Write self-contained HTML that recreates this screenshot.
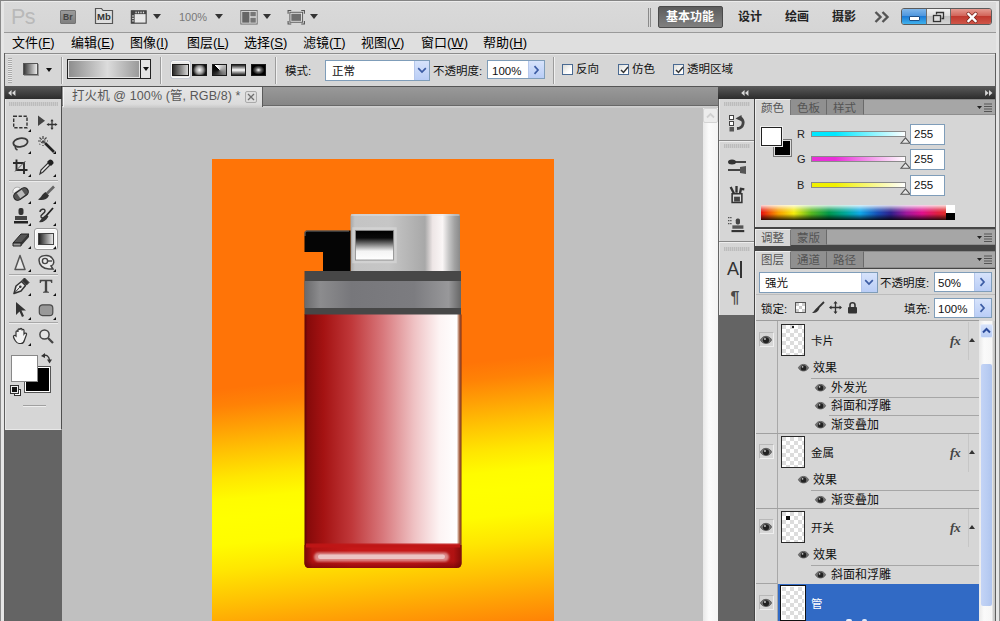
<!DOCTYPE html>
<html><head><meta charset="utf-8">
<style>
*{box-sizing:border-box;margin:0;padding:0}
html,body{width:1000px;height:621px;overflow:hidden;background:#646464}
body{font-family:"Liberation Sans","Noto Sans CJK SC",sans-serif;font-size:12px;color:#111;position:relative}
.a{position:absolute}
#root{position:absolute;left:0;top:0;width:1000px;height:621px;overflow:hidden;background:#646464}
.t{position:absolute;white-space:nowrap;line-height:16px;height:16px}
/* top bars */
#appbar{left:0;top:0;width:1000px;height:33px;background:linear-gradient(#dadada,#d5d5d5);box-shadow:inset 0 1px 0 #ececec;border-top:1px solid #808080;border-bottom:1px solid #9a9a9a}
#menubar{left:0;top:33px;width:1000px;height:20px;background:#dfdfdf}
#optbar{left:0;top:53px;width:1000px;height:33px;background:#d6d6d6;border-top:1px solid #8c8c8c}
.menu{font-size:13px;top:35px;color:#000}
.menu u{text-decoration:underline;text-underline-offset:1px}
.sep{position:absolute;width:2px;background:linear-gradient(90deg,#9c9c9c 50%,#f0f0f0 50%)}
.box{position:absolute;background:#fff;border:1px solid #7f9db9}
.arrowbtn{position:absolute;background:linear-gradient(#d7e3fb,#b9cdf6);border-left:1px solid #b5c7eb}
.chk{position:absolute;width:11px;height:11px;background:linear-gradient(135deg,#dcdcd8,#fff 70%);border:1px solid #4a6a92}

.tri{width:0;height:0;border-left:4px solid transparent;border-right:4px solid transparent;border-top:5px solid #333}
.ws{font-size:12px;font-weight:bold;color:#222}

.gi{top:64px;width:15px;height:11.500px;border:1px solid #1a1a1a}

.cnr{width:0;height:0;border-left:3px solid transparent;border-bottom:3px solid #111}
svg{overflow:visible}
</style></head><body><div id="root">

<!-- document area -->
<div class="a" id="docarea" style="left:62px;top:86px;width:656px;height:535px;background:#c0c0c0"></div>


<!-- DOC TAB BAR -->
<div class="a" style="left:62px;top:86px;width:656px;height:22px;background:linear-gradient(#555 0,#555 1px,#999 1px,#868686 19px,#686868 19px,#686868 20px,#d2d2d2 20px,#c8c8c8 22px)"></div>
<div class="a" style="left:63px;top:87px;width:200px;height:20px;background:linear-gradient(#e6e6e6,#dcdcdc 17px,#cdcdcd);border-right:1px solid #5a5a5a;border-left:1px solid #f4f4f4"></div>
<div class="t" style="left:72px;top:88px;font-size:12.500px;color:#585858;letter-spacing:.1px">打火机 @ 100% (管, RGB/8) *</div>
<div class="a" style="left:245px;top:91px;width:12px;height:12px;border:1px solid #aaa;border-radius:2px;background:#dedede"></div>
<svg class="a" style="left:247px;top:93px" width="8" height="8" viewBox="0 0 8 8"><path d="M1 1L7 7M7 1L1 7" stroke="#6e6e6e" stroke-width="1.300"/></svg>
<!-- CANVAS -->
<div class="a" style="left:212px;top:159px;width:342px;height:470px;background:linear-gradient(174deg,#ff7407 0,#ff7407 229.3px,#ff8206 247.2px,#ffa005 269.0px,#ffc403 293.9px,#ffe601 318.8px,#fffc00 340.6px,#ffff00 358.5px,#fffc00 384.6px,#ffe601 410.5px,#ffc403 439.8px,#ffa005 469.1px,#ff8206 495.0px,#ff7407 516.1px)"></div>
<svg class="a" style="left:290px;top:200px" width="190" height="380" viewBox="290 200 190 380">
<defs>
<linearGradient id="gmetal" x1="0" x2="1" y1="0" y2="0"><stop offset="0" stop-color="#a8a8a8"/><stop offset=".04" stop-color="#c4c4c4"/><stop offset=".35" stop-color="#c6c6c6"/><stop offset=".55" stop-color="#b4b4b4"/><stop offset=".68" stop-color="#a8a8a8"/><stop offset=".75" stop-color="#eee6e6"/><stop offset=".84" stop-color="#faf6f6"/><stop offset=".9" stop-color="#c4c4c4"/><stop offset=".95" stop-color="#a2a2a2"/><stop offset="1" stop-color="#8a8a8a"/></linearGradient>
<linearGradient id="gwin" x1="0" x2="0" y1="0" y2="1"><stop offset="0" stop-color="#000"/><stop offset=".25" stop-color="#0a0a0a"/><stop offset=".7" stop-color="#f4f4f4"/><stop offset="1" stop-color="#fff"/></linearGradient>
<linearGradient id="gband" x1="0" x2="1" y1="0" y2="0"><stop offset="0" stop-color="#6a6a6c"/><stop offset=".1" stop-color="#8c8c8e"/><stop offset=".3" stop-color="#77777b"/><stop offset=".7" stop-color="#7c7c80"/><stop offset=".92" stop-color="#98989a"/><stop offset="1" stop-color="#666"/></linearGradient>
<linearGradient id="gred" x1="0" x2="1" y1="0" y2="0"><stop offset="0" stop-color="#5c0606"/><stop offset=".02" stop-color="#860a0a"/><stop offset=".12" stop-color="#a41212"/><stop offset=".3" stop-color="#c0383a"/><stop offset=".5" stop-color="#d8787c"/><stop offset=".7" stop-color="#efc2c4"/><stop offset=".86" stop-color="#fdf4f4"/><stop offset=".97" stop-color="#ffffff"/><stop offset=".985" stop-color="#b07050"/><stop offset="1" stop-color="#7a2a10"/></linearGradient>
<linearGradient id="gbase" x1="0" x2="1" y1="0" y2="0"><stop offset="0" stop-color="#780808"/><stop offset=".05" stop-color="#b01212"/><stop offset=".3" stop-color="#c61818"/><stop offset=".7" stop-color="#c61818"/><stop offset=".95" stop-color="#b01212"/><stop offset="1" stop-color="#800a0a"/></linearGradient><linearGradient id="gbase2" x1="0" x2="0" y1="0" y2="1"><stop offset="0" stop-color="#600000" stop-opacity="0"/><stop offset=".7" stop-color="#600000" stop-opacity="0"/><stop offset="1" stop-color="#600000" stop-opacity=".55"/></linearGradient>
<filter id="b1"><feGaussianBlur stdDeviation="1.2"/></filter>
<filter id="b2"><feGaussianBlur stdDeviation=".7"/></filter>
</defs>
<!-- metal cap -->
<path d="M350.500 216Q350.500 214 352.500 214H457.500Q460 214 460 216V271.500H350.500Z" fill="url(#gmetal)"/><path d="M351 215H459.500" stroke="#e8e8e8" stroke-width="1.200" opacity=".8"/>
<rect x="353.500" y="228.500" width="42" height="33.500" fill="none" stroke="#dcdcdc" stroke-width="2.500" opacity=".55"/><rect x="355.500" y="230.500" width="38" height="29.500" fill="url(#gwin)" stroke="#8a8a8a" stroke-width=".8"/>
<!-- switch -->
<path d="M304.500 233Q304.500 230.500 307 230.500H350.500V271.500H323V252H304.500Z" fill="#050505"/><path d="M305 236V233Q305 231 307 231H349" fill="none" stroke="#8a8a8a" stroke-width="1" opacity=".8"/>
<!-- bands -->
<rect x="304.500" y="271" width="156.500" height="44" fill="#474747"/>
<rect x="304.500" y="281" width="156.500" height="27" fill="url(#gband)"/>
<!-- body -->
<path d="M304.500 314.500H461.500V563Q461.500 568 456.500 568H309.500Q304.500 568 304.500 563Z" fill="url(#gred)"/>
<path d="M304.500 545H461.500V563Q461.500 568 456.500 568H309.500Q304.500 568 304.500 563Z" fill="url(#gbase)"/><path d="M304.500 545H461.500V563Q461.500 568 456.500 568H309.500Q304.500 568 304.500 563Z" fill="url(#gbase2)"/>
<rect x="306" y="543.500" width="154" height="4" fill="#c01616" filter="url(#b2)" opacity=".9"/>
<rect x="314" y="552.500" width="135" height="9" rx="4.500" fill="#dc8888" filter="url(#b1)"/>
<rect x="318" y="554.500" width="127" height="4.500" rx="2.200" fill="#ecc4c4" filter="url(#b2)"/>
</svg>
<!-- canvas v-scrollbar -->
<div class="a" style="left:703px;top:108px;width:15px;height:513px;background:linear-gradient(90deg,#e8e8e8,#fbfbfb 40%,#f4f4f4)"></div>
<div class="a" style="left:703px;top:108px;width:15px;height:15px;background:#ececec;border:1px solid #d4d4d4;border-radius:2px"></div>
<svg class="a" style="left:706px;top:112px" width="9" height="7" viewBox="0 0 9 7"><path d="M1 5.500L4.500 2L8 5.500" fill="none" stroke="#d0d0d0" stroke-width="1.800"/></svg>
<!-- END CANVAS -->

<div class="a" id="appbar"></div>
<div class="a" id="menubar"></div>
<div class="a" id="optbar"></div>


<!-- APP BAR CONTENT -->
<div class="t" style="left:11px;top:3px;font-size:21.500px;line-height:28px;height:28px;color:#b9b9b9;letter-spacing:-0.5px">Ps</div>
<div class="a" style="left:60px;top:10px;width:16px;height:14px;background:linear-gradient(#9a9a9a,#808080);border:1px solid #747474;border-radius:1px"></div>
<div class="t" style="left:63px;top:10px;font-size:8.500px;font-weight:bold;color:#444;line-height:14px;height:14px">Br</div>
<svg class="a" style="left:94px;top:7px" width="20" height="18" viewBox="0 0 20 18"><path d="M1.5 16.5V1.5H7.5L9 3.5H18.500V16.5Z" fill="#dedede" stroke="#555" stroke-width="1.2"/></svg>
<div class="t" style="left:97px;top:10px;font-size:9.5px;font-weight:bold;color:#333;line-height:14px;height:14px">Mb</div>
<svg class="a" style="left:130px;top:10px" width="17.500" height="14" viewBox="0 0 20 17"><rect x="1" y="1" width="18" height="15" fill="#e8e8e8" stroke="#444" stroke-width="1.4"/><rect x="1" y="1" width="18" height="4" fill="#444"/><rect x="1" y="1" width="4" height="15" fill="#444"/><g fill="#ddd"><rect x="2" y="6.500" width="2" height="1.500"/><rect x="2" y="9.500" width="2" height="1.500"/><rect x="2" y="12.500" width="2" height="1.500"/><rect x="6" y="2" width="1.500" height="2"/><rect x="9" y="2" width="1.500" height="2"/><rect x="12" y="2" width="1.500" height="2"/><rect x="15" y="2" width="1.500" height="2"/></g></svg>
<div class="a tri" style="left:153px;top:14px"></div>
<div class="t" style="left:179px;top:9px;font-size:11px;color:#777">100%</div>
<div class="a tri" style="left:215px;top:14px"></div>
<svg class="a" style="left:240px;top:9.500px" width="18" height="14.500" viewBox="0 0 19 16"><rect x=".5" y=".5" width="18" height="15" fill="#e4e4e4" stroke="#666"/><rect x="2" y="2" width="8" height="12" fill="#666"/><rect x="11" y="2" width="6" height="5" fill="#777"/><rect x="11" y="8.500" width="6" height="5.500" fill="#777"/></svg>
<div class="a tri" style="left:263px;top:14px"></div>
<svg class="a" style="left:287px;top:9.500px" width="18.500" height="14.500" viewBox="0 0 19 16"><rect x="3.500" y="3.500" width="12" height="9" fill="#6e6e6e" stroke="#eee" stroke-width="1"/><rect x="2.500" y="2.500" width="14" height="11" fill="none" stroke="#555" stroke-width="1"/><path d="M.5 4V.5H4M15 .5H18.500V4M18.500 12V15.500H15M4 15.500H.5V12" fill="none" stroke="#555" stroke-width="1.200"/></svg>
<div class="a tri" style="left:310px;top:14px"></div>

<div class="a" style="left:648px;top:8px;width:1px;height:19px;background:#8a8a8a"></div>
<div class="a" style="left:650px;top:8px;width:1px;height:19px;background:#8a8a8a"></div>
<div class="a" style="left:658px;top:6px;width:65px;height:22px;background:linear-gradient(#5c5c5c,#808080);border:1px solid #4a4a4a;border-radius:2px"></div>
<div class="t ws" style="left:666px;top:9px;color:#fff">基本功能</div>
<div class="t ws" style="left:738px;top:9px">设计</div>
<div class="t ws" style="left:785px;top:9px">绘画</div>
<div class="t ws" style="left:832px;top:9px">摄影</div>
<svg class="a" style="left:874px;top:11px" width="16" height="12" viewBox="0 0 16 12"><path d="M1.5 1L6.500 6L1.5 11M8.500 1L13.500 6L8.500 11" fill="none" stroke="#555" stroke-width="2.400"/></svg>
<!-- window buttons -->
<div class="a" style="left:901px;top:8px;width:91px;height:17px;border-radius:3px;border:1px solid #5b5b5b;overflow:hidden;background:#ccc">
 <div class="a" style="left:0;top:0;width:24px;height:15px;background:linear-gradient(#7fb6ea 0,#4f97de 45%,#1c7bd6 50%,#3fb1ec 100%)"></div>
 <div class="a" style="left:24px;top:0;width:25px;height:15px;background:linear-gradient(#f2f2f2 0,#dcdcdc 45%,#c2c2c2 50%,#d4d4d4 100%);border-left:1px solid #6d6d6d;border-right:1px solid #6d6d6d"></div>
 <div class="a" style="left:49px;top:0;width:41px;height:15px;background:linear-gradient(#e59a90 0,#d2655a 45%,#c0392f 50%,#cf5547 100%)"></div>
 <div class="a" style="left:7px;top:7px;width:11px;height:5px;background:#fff;border:1px solid #1d4f86;border-radius:1px"></div>
 <svg class="a" style="left:30px;top:2px" width="13" height="12" viewBox="0 0 13 12"><path d="M4.500 3.500V1.500H11.500V7.500H9.500" fill="none" stroke="#333" stroke-width="1.300"/><rect x="1.500" y="4.500" width="7" height="6" fill="#ddd" stroke="#333" stroke-width="1.300"/></svg>
 <svg class="a" style="left:63.500px;top:2.500px" width="12" height="11" viewBox="0 0 13 12"><path d="M2.500 2L10.500 10M10.500 2L2.500 10" stroke="#7a2a22" stroke-width="4.200" stroke-linecap="round"/><path d="M2.500 2L10.500 10M10.500 2L2.500 10" stroke="#fff" stroke-width="2.600" stroke-linecap="round"/></svg>
</div>
<!-- END APP BAR -->


<!-- MENU -->
<div class="t menu" style="left:12px">文件(<u>F</u>)</div>
<div class="t menu" style="left:71px">编辑(<u>E</u>)</div>
<div class="t menu" style="left:130px">图像(<u>I</u>)</div>
<div class="t menu" style="left:187px">图层(<u>L</u>)</div>
<div class="t menu" style="left:244px">选择(<u>S</u>)</div>
<div class="t menu" style="left:303px">滤镜(<u>T</u>)</div>
<div class="t menu" style="left:361px">视图(<u>V</u>)</div>
<div class="t menu" style="left:421px">窗口(<u>W</u>)</div>
<div class="t menu" style="left:483px">帮助(<u>H</u>)</div>

<!-- OPTIONS BAR -->
<div class="a" style="left:8px;top:58px;width:4px;height:25px;background:repeating-linear-gradient(#aaa 0,#aaa 1px,#e8e8e8 1px,#e8e8e8 2px)"></div>
<div class="a" style="left:23px;top:63px;width:15px;height:12px;background:linear-gradient(90deg,#3a3a3a,#ececec);border:1px solid #555;box-shadow:1px 1px 0 #999"></div>
<div class="a tri" style="left:46px;top:68px;border-left-width:3px;border-right-width:3px;border-top-width:4px;border-top-color:#111"></div>
<div class="sep" style="left:61px;top:57px;height:27px"></div>
<div class="a" style="left:67px;top:59px;width:84px;height:20px;border:1px solid #222;background:#e4e4e4">
  <div class="a" style="left:1px;top:1px;width:70px;height:16px;background:linear-gradient(90deg,#8e8e8e,#dcdcdc 55%,#9a9a9a)"></div>
  <div class="a" style="left:72px;top:0;width:1px;height:18px;background:#222"></div>
  <div class="a tri" style="left:75px;top:7px;border-left-width:3px;border-right-width:3px;border-top-width:4px;border-top-color:#111"></div>
</div>
<div class="sep" style="left:160px;top:57px;height:27px"></div>
<div class="a" style="left:170.500px;top:61px;width:19.500px;height:16.500px;border:1px solid #f8f8f8;background:#eaeaea;border-radius:2px;box-shadow:0 0 0 1px #c4c8d0"></div>
<div class="a gi" style="left:172px;width:16.500px;background:linear-gradient(90deg,#2a2a2a,#d8d8d8)"></div>
<div class="a gi" style="left:192px;background:radial-gradient(circle,#fff 0,#999 45%,#111 80%)"></div>
<div class="a gi" style="left:211.500px;background:conic-gradient(from 315deg at 50% 50%,#fff,#bbb 25%,#777 50%,#111 85%,#000)"></div>
<div class="a gi" style="left:231px;background:linear-gradient(#222,#fff 50%,#222)"></div>
<div class="a gi" style="left:250.500px;background:radial-gradient(ellipse,#fff 0,#666 30%,#000 65%)"></div>
<div class="sep" style="left:275px;top:57px;height:27px"></div>
<div class="t" style="left:285px;top:63px;font-size:11.500px">模式:</div>
<div class="box" style="left:325px;top:60px;width:105px;height:21px"></div>
<div class="t" style="left:332px;top:63px;font-size:11.500px">正常</div>
<div class="arrowbtn" style="left:414px;top:61px;width:15px;height:19px"></div>
<svg class="a" style="left:417px;top:67px" width="10" height="7" viewBox="0 0 10 7"><path d="M1.200 1.200L5 5L8.800 1.200" fill="none" stroke="#3c5ca4" stroke-width="1.700"/></svg>
<div class="t" style="left:433px;top:63px;font-size:11.500px">不透明度:</div>
<div class="box" style="left:487px;top:60px;width:58px;height:19px"></div>
<div class="t" style="left:492px;top:63px;font-size:11.500px">100%</div>
<div class="arrowbtn" style="left:528px;top:61px;width:16px;height:17px"></div>
<svg class="a" style="left:533px;top:65px" width="7" height="10" viewBox="0 0 7 10"><path d="M1.500 1.200L5 5L1.500 8.800" fill="none" stroke="#3c5ca4" stroke-width="1.700"/></svg>
<div class="sep" style="left:553px;top:57px;height:27px"></div>
<div class="chk" style="left:562px;top:64px"></div><div class="t" style="left:576px;top:61px;font-size:11.500px">反向</div>
<div class="chk" style="left:618px;top:64px"></div><div class="t" style="left:632px;top:61px;font-size:11.500px">仿色</div>
<div class="chk" style="left:673px;top:64px"></div><div class="t" style="left:687px;top:61px;font-size:11.500px">透明区域</div>
<svg class="a" style="left:620px;top:66px" width="9" height="8" viewBox="0 0 9 8"><path d="M1 4L3.500 6.500L8 1" fill="none" stroke="#333" stroke-width="1.500"/></svg>
<svg class="a" style="left:675px;top:66px" width="9" height="8" viewBox="0 0 9 8"><path d="M1 4L3.500 6.500L8 1" fill="none" stroke="#333" stroke-width="1.500"/></svg>
<!-- END OPTIONS -->


<!-- TOOLBAR -->
<div class="a" style="left:5px;top:86px;width:57px;height:13px;background:linear-gradient(#585858,#2c2c2c);border-right:1px solid #333"></div>
<div class="a" style="left:5px;top:99px;width:57px;height:331px;background:#d6d6d6;border-left:1px solid #e8e8e8;border-bottom:1px solid #e8e8e8;border-right:1px solid #4e4e4e"></div>
<svg class="a" style="left:8px;top:89.500px" width="8" height="6" viewBox="0 0 9 7"><path d="M4 0L0 3.500L4 7ZM8.500 0L4.500 3.500L8.500 7Z" fill="#d8d8d8"/></svg>
<div class="a" style="left:9px;top:102px;width:49px;height:4px;background:repeating-linear-gradient(90deg,#bcbcbc 0,#bcbcbc 1px,#cccccc 1px,#cccccc 2px)"></div>
<div class="a" style="left:9px;top:179.5px;width:49px;height:2px;background:linear-gradient(#a8a8a8 50%,#ececec 50%)"></div>
<div class="a" style="left:9px;top:273.5px;width:49px;height:2px;background:linear-gradient(#a8a8a8 50%,#ececec 50%)"></div>
<div class="a" style="left:9px;top:322.0px;width:49px;height:2px;background:linear-gradient(#a8a8a8 50%,#ececec 50%)"></div>
<div class="a" style="left:34px;top:228px;width:24px;height:22px;background:#f4f4f4;border:1px solid #9a9a9a;border-radius:3px;box-shadow:inset 0 0 0 1px #fff"></div>
<div class="a" style="left:38px;top:233px;width:16px;height:12px;background:linear-gradient(90deg,#222,#e8e8e8);border:1px solid #444"></div>
<svg class="a" style="left:12.0px;top:112.5px" width="18" height="18" viewBox="0 0 18 18"><rect x="1.700" y="3.200" width="13.300" height="11.600" fill="none" stroke="#333" stroke-width="1.400" stroke-dasharray="3.300 1.600"/></svg>
<svg class="a" style="left:37.0px;top:112.5px" width="18" height="18" viewBox="0 0 18 18"><path d="M1 2.500L1 13L8 7.800Z" fill="#444"/><path d="M15 7.500V15.500M11 11.500H19" stroke="#333" stroke-width="1.300" fill="none"/><path d="M15 6L13.400 8.200H16.600ZM15 17L13.400 14.800H16.600ZM9.500 11.500L11.700 9.900V13.100ZM20.500 11.500L18.300 9.900V13.100Z" fill="#333"/></svg>
<svg class="a" style="left:12.0px;top:135.0px" width="18" height="18" viewBox="0 0 18 18"><ellipse cx="8.500" cy="7.500" rx="7.200" ry="4.300" fill="none" stroke="#3a3a3a" stroke-width="1.800" transform="rotate(-10 8.500 7.500)"/><path d="M4 10.500C2.500 12 3.500 14 5.500 15" fill="none" stroke="#3a3a3a" stroke-width="1.600"/></svg>
<svg class="a" style="left:37.0px;top:135.0px" width="18" height="18" viewBox="0 0 18 18"><path d="M6 1V11M1 6H11M2.500 2.500L9.500 9.500M9.500 2.500L2.500 9.500" stroke="#444" stroke-width="1.200" stroke-dasharray="3 1.500"/><path d="M8 8L17 17" stroke="#222" stroke-width="2.600"/></svg>
<svg class="a" style="left:12.0px;top:157.5px" width="18" height="18" viewBox="0 0 18 18"><path d="M4.500 1.500V12H15.500M1 5H12V16" fill="none" stroke="#2a2a2a" stroke-width="1.900"/><path d="M3 13.500L13.500 3" stroke="#555" stroke-width="1"/></svg>
<svg class="a" style="left:37.0px;top:157.5px" width="18" height="18" viewBox="0 0 18 18"><path d="M3 16L4 12L11 5L13 7L6 14Z" fill="#eee" stroke="#333" stroke-width="1.200"/><path d="M10 4L14 8L16 6C18 4 14 0 12 2Z" fill="#222"/></svg>
<svg class="a" style="left:12.0px;top:184.5px" width="18" height="18" viewBox="0 0 18 18"><rect x="1" y="5" width="16" height="8" rx="4" fill="#555" stroke="#222" transform="rotate(-35 9 9)"/><rect x="6" y="6" width="6" height="6" fill="#bbb" transform="rotate(-35 9 9)"/><path d="M1 8C0 3 5 1 8 3" fill="#f4f4f4" stroke="#999" stroke-width=".8"/></svg>
<svg class="a" style="left:37.0px;top:184.5px" width="18" height="18" viewBox="0 0 18 18"><path d="M17 1.500L10 8.500" stroke="#666" stroke-width="2.600"/><path d="M8.500 7L12 10.500C10.500 14.500 5 16 1 14.500C4 13 4.500 9.500 8.500 7Z" fill="#333"/></svg>
<svg class="a" style="left:12.0px;top:207.0px" width="18" height="18" viewBox="0 0 18 18"><rect x="6.500" y="1" width="5" height="7" rx="2" fill="#333"/><path d="M3 9H15V13H3Z" fill="#444"/><rect x="2" y="14" width="14" height="2.500" fill="#222"/></svg>
<svg class="a" style="left:37.0px;top:207.0px" width="18" height="18" viewBox="0 0 18 18"><path d="M16 1L9 9" stroke="#222" stroke-width="1.800"/><path d="M9 8L11 10C9 14 5 16 2 15C4 13 5 10 9 8Z" fill="#333"/><path d="M3 5C3 2 8 1 8 4C8 7 3 7 4 10C5 12 9 11 11 9" fill="none" stroke="#333" stroke-width="1.500"/></svg>
<svg class="a" style="left:12.0px;top:229.5px" width="18" height="18" viewBox="0 0 18 18"><path d="M1 13L9 4H17L9 13Z" fill="#555" stroke="#222"/><path d="M1 13H9V16H1Z" fill="#999" stroke="#222"/><path d="M9 13L17 4V7L9 16Z" fill="#333"/></svg>
<svg class="a" style="left:12.0px;top:252.5px" width="18" height="18" viewBox="0 0 18 18"><path d="M8 2.500L13 16.500H3Z" fill="#e8e8e8" stroke="#555" stroke-width="1.500" stroke-linejoin="round"/></svg>
<svg class="a" style="left:37.0px;top:252.5px" width="18" height="18" viewBox="0 0 18 18"><path d="M2 7C2 2 12 1 15 5C18 8 17 12 14 13L16 16H12C6 16 2 12 2 7Z" fill="#e8e8e8" stroke="#444" stroke-width="1.500"/><circle cx="8" cy="8" r="2.600" fill="none" stroke="#444" stroke-width="1.400"/><path d="M10.500 8H15" stroke="#444" stroke-width="1.400"/></svg>
<svg class="a" style="left:12.0px;top:277.0px" width="18" height="18" viewBox="0 0 18 18"><path d="M2 16.500L4 9L9.500 4.500L13.500 8.500L9 14Z" fill="#e8e8e8" stroke="#333" stroke-width="1.500" stroke-linejoin="round"/><path d="M10 3.500L12.500 1L17 5.500L14.500 8Z" fill="#333" stroke="#333" stroke-width="1"/><circle cx="8.300" cy="9.800" r="1.300" fill="#333"/><path d="M2 16.500L7.500 10.500" stroke="#333" stroke-width="1"/></svg>
<svg class="a" style="left:37.0px;top:277.0px" width="18" height="18" viewBox="0 0 18 18"><path transform="translate(9 9.300) scale(.9) translate(-9 -9.300)" d="M2 2H16V5.500H14.800C14.500 4 14 3.600 12.500 3.600H10.300V14C10.300 15 10.800 15.300 12.300 15.400V16.500H5.700V15.400C7.200 15.300 7.700 15 7.700 14V3.600H5.500C4 3.600 3.500 4 3.200 5.500H2Z" fill="#444"/></svg>
<svg class="a" style="left:12.0px;top:301.0px" width="18" height="18" viewBox="0 0 18 18"><path d="M4 1V14L7.500 10.500L10 16L12 15L9.500 9.500H14Z" fill="#333"/></svg>
<svg class="a" style="left:37.0px;top:301.0px" width="18" height="18" viewBox="0 0 18 18"><rect x="2.300" y="3.800" width="13.500" height="10.800" rx="3.200" fill="#999" stroke="#4a4a4a" stroke-width="1.200"/></svg>
<svg class="a" style="left:12.0px;top:326.5px" width="18" height="18" viewBox="0 0 18 18"><path d="M4 9V5C4 3.500 6 3.500 6 5V3C6 1.500 8 1.500 8 3V2.500C8 1 10 1 10 2.500V3.500C10 2 12 2 12 3.500V7C13 5.500 15 6 14.500 7.500L12.500 13C12 15 11 16.500 9 16.500H7C4.500 16.500 2 12 1.500 10C1 8.500 3 8 4 9Z" fill="#f2f2f2" stroke="#333" stroke-width="1.200"/></svg>
<svg class="a" style="left:37.0px;top:326.5px" width="18" height="18" viewBox="0 0 18 18"><circle cx="7.500" cy="7.500" r="4.600" fill="#e4e4e4" stroke="#444" stroke-width="1.500"/><path d="M11 11L16 16" stroke="#444" stroke-width="2.300"/></svg>
<div class="a cnr" style="left:28px;top:128.5px"></div>
<div class="a cnr" style="left:28px;top:151px"></div>
<div class="a cnr" style="left:53px;top:151px"></div>
<div class="a cnr" style="left:28px;top:173.5px"></div>
<div class="a cnr" style="left:53px;top:173.5px"></div>
<div class="a cnr" style="left:28px;top:200.5px"></div>
<div class="a cnr" style="left:53px;top:200.5px"></div>
<div class="a cnr" style="left:28px;top:223px"></div>
<div class="a cnr" style="left:53px;top:223px"></div>
<div class="a cnr" style="left:28px;top:245.5px"></div>
<div class="a cnr" style="left:53px;top:245.5px"></div>
<div class="a cnr" style="left:28px;top:268.5px"></div>
<div class="a cnr" style="left:53px;top:268.5px"></div>
<div class="a cnr" style="left:28px;top:293px"></div>
<div class="a cnr" style="left:53px;top:293px"></div>
<div class="a cnr" style="left:28px;top:317px"></div>
<div class="a cnr" style="left:53px;top:317px"></div>
<div class="a cnr" style="left:28px;top:342.5px"></div>
<div class="a" style="left:25px;top:367px;width:25px;height:25px;background:#000;border:1px solid #fff;box-shadow:0 0 0 1px #555"></div>
<div class="a" style="left:12px;top:356px;width:25px;height:25px;background:#fff;border:1px solid #fff;box-shadow:0 0 0 1px #888"></div>
<svg class="a" style="left:41px;top:352px" width="11" height="12" viewBox="0 0 11 12"><path d="M2 4C5 2 8 4 8.500 8" fill="none" stroke="#333" stroke-width="1.400"/><path d="M0 4L4 1V6ZM8.500 11.500L6 7.500H11Z" fill="#333"/></svg>
<div class="a" style="left:14px;top:389px;width:7px;height:7px;background:#fff;border:1px solid #333"></div>
<div class="a" style="left:11px;top:386px;width:7px;height:7px;background:#111;border:1px solid #eee;box-shadow:0 0 0 1px #333"></div>
<div class="a" style="left:23px;top:405px;width:23px;height:2px;background:linear-gradient(#a0a0a0 50%,#eee 50%)"></div>
<!-- END TOOLBAR -->


<!-- RIGHT PANELS -->
<div class="a" style="left:718px;top:86px;width:277px;height:13px;background:linear-gradient(#5a5a5a,#2c2c2c)"></div>
<svg class="a" style="left:741px;top:89.500px" width="8" height="6" viewBox="0 0 9 7"><path d="M4 0L0 3.500L4 7ZM8.500 0L4.500 3.500L8.500 7Z" fill="#d8d8d8"/></svg>
<svg class="a" style="left:984.500px;top:89.500px" width="8" height="6" viewBox="0 0 9 7"><path d="M0 0L4 3.500L0 7ZM4.500 0L8.500 3.500L4.500 7Z" fill="#d8d8d8"/></svg>
<div class="a" style="left:719px;top:99px;width:35px;height:216px;background:#d6d6d6;border-left:1px solid #e8e8e8"></div>
<div class="a" style="left:719px;top:140px;width:35px;height:2px;background:linear-gradient(#888 50%,#eee 50%)"></div>
<div class="a" style="left:719px;top:241px;width:35px;height:2px;background:linear-gradient(#888 50%,#eee 50%)"></div>
<div class="a" style="left:724px;top:102px;width:26px;height:4px;background:repeating-linear-gradient(90deg,#bcbcbc 0,#bcbcbc 1px,#cccccc 1px,#cccccc 2px)"></div>
<div class="a" style="left:724px;top:144px;width:26px;height:4px;background:repeating-linear-gradient(90deg,#bcbcbc 0,#bcbcbc 1px,#cccccc 1px,#cccccc 2px)"></div>
<div class="a" style="left:724px;top:247px;width:26px;height:4px;background:repeating-linear-gradient(90deg,#bcbcbc 0,#bcbcbc 1px,#cccccc 1px,#cccccc 2px)"></div>
<svg class="a" style="left:728px;top:114px" width="18" height="18" viewBox="0 0 18 18"><rect x="1.500" y="1.500" width="4" height="4" fill="#fff" stroke="#444"/><rect x="1.500" y="7.500" width="4" height="4" fill="#fff" stroke="#444"/><rect x="1.500" y="13" width="4.500" height="4.500" fill="#555"/><path d="M9 14.500C16 14 17 6.500 12 3.500" fill="none" stroke="#444" stroke-width="2.800"/><path d="M7.500 4.500L13.500 1L14 7.500Z" fill="#444"/></svg>
<svg class="a" style="left:727px;top:158px" width="20" height="17" viewBox="0 0 20 17"><path d="M4 4H19M1 12H14" stroke="#444" stroke-width="1.800"/><ellipse cx="5" cy="4" rx="4" ry="2.500" fill="#333"/><path d="M13 9L19 8V16L13 15Z" fill="#555"/></svg>
<svg class="a" style="left:727.500px;top:185px" width="18" height="19.500" viewBox="0 0 18 20"><path d="M2.500 2L6 9M8.500 1V8" stroke="#333" stroke-width="2.400"/><path d="M12 9L13 4L16.500 4.500" stroke="#333" stroke-width="2.400" fill="none"/><path d="M4 9H14V18H4Z" fill="#ddd" stroke="#333" stroke-width="1.600"/><rect x="6" y="12" width="6" height="5" fill="#444"/></svg>
<svg class="a" style="left:725.500px;top:216px" width="19.500" height="17" viewBox="0 0 20 20"><path d="M1 2H5M1 5.500H5M1 9H5" stroke="#444" stroke-width="1.500" stroke-dasharray="1.500 1"/><rect x="10" y="3" width="5" height="7" rx="2" fill="#444"/><path d="M6 11H19V15H6Z" fill="#555"/><rect x="5" y="16.500" width="15" height="2.500" fill="#333"/></svg>
<div class="t" style="left:727px;top:259px;font-size:18px;line-height:20px;height:20px;color:#333">A</div>
<div class="a" style="left:740px;top:261px;width:1.500px;height:17px;background:#333"></div>
<div class="t" style="left:730.500px;top:289px;font-size:16px;line-height:18px;height:18px;color:#4a4a4a;font-weight:bold">¶</div>
<div class="a" style="left:754px;top:99px;width:241px;height:522px;background:#454545"></div>
<div class="a" style="left:995px;top:53px;width:1px;height:568px;background:#5e5e5e"></div>
<div class="a" style="left:996px;top:0;width:4px;height:621px;background:linear-gradient(90deg,#e6e6e6 0,#e6e6e6 3px,#8e8e8e 3px)"></div>
<div class="a" style="left:755px;top:99px;width:240px;height:16px;background:#a6a6a6;border-top:1px solid #8a8a8a;border-bottom:1px solid #8e8e8e"></div>
<div class="a" style="left:755px;top:99px;width:36px;height:17px;background:#d6d6d6;border-right:1px solid #777;border-left:1px solid #eee;border-top:1px solid #eee"></div>
<div class="t" style="left:761px;top:99px;font-size:11.500px;color:#555;margin-top:.5px">颜色</div>
<div class="a" style="left:791px;top:99px;width:36px;height:16px;background:#909090;border-right:1px solid #6a6a6a;border-top:1px solid #8a8a8a;border-bottom:1px solid #8e8e8e"></div>
<div class="t" style="left:797px;top:99px;font-size:11.500px;color:#545454;margin-top:.5px">色板</div>
<div class="a" style="left:827px;top:99px;width:37px;height:16px;background:#909090;border-right:1px solid #6a6a6a;border-top:1px solid #8a8a8a;border-bottom:1px solid #8e8e8e"></div>
<div class="t" style="left:833px;top:99px;font-size:11.500px;color:#545454;margin-top:.5px">样式</div>
<svg class="a" style="left:977px;top:103px" width="16" height="9" viewBox="0 0 16 9"><path d="M0 3H5L2.500 6Z" fill="#222"/><path d="M7 1H15M7 3.500H15M7 6H15M7 8.500H15" stroke="#555" stroke-width="1.200"/></svg>
<div class="a" style="left:755px;top:115px;width:240px;height:112px;background:#d6d6d6;border-left:1px solid #ececec"></div>
<div class="a" style="left:774px;top:140px;width:17px;height:16px;background:#000;border:1px solid #ddd;box-shadow:0 0 0 1px #777"></div>
<div class="a" style="left:762px;top:128px;width:19px;height:17px;background:#fff;border:1px solid #fff;box-shadow:0 0 0 1px #222, 0 0 0 2px #eee"></div>
<div class="t" style="left:797px;top:126px;font-size:11px;color:#222">R</div>
<div class="a" style="left:811px;top:131px;width:95px;height:6px;background:linear-gradient(90deg,#00e8ff 0,#00e8ff 25%,#fff 100%);border:1px solid #8a8a8a"></div>
<svg class="a" style="left:900px;top:137px" width="11" height="7" viewBox="0 0 11 7"><path d="M5.500 .8L10 6.200H1Z" fill="#e8e8e8" stroke="#555" stroke-width="1.100"/></svg>
<div class="box" style="left:910px;top:124px;width:35px;height:21px"></div>
<div class="t" style="left:914px;top:126px;font-size:11.500px;color:#111">255</div>
<div class="t" style="left:797px;top:151px;font-size:11px;color:#222">G</div>
<div class="a" style="left:811px;top:156px;width:95px;height:6px;background:linear-gradient(90deg,#e830d8 0,#e830d8 25%,#fff 100%);border:1px solid #8a8a8a"></div>
<svg class="a" style="left:900px;top:162px" width="11" height="7" viewBox="0 0 11 7"><path d="M5.500 .8L10 6.200H1Z" fill="#e8e8e8" stroke="#555" stroke-width="1.100"/></svg>
<div class="box" style="left:910px;top:149px;width:35px;height:21px"></div>
<div class="t" style="left:914px;top:151px;font-size:11.500px;color:#111">255</div>
<div class="t" style="left:797px;top:177px;font-size:11px;color:#222">B</div>
<div class="a" style="left:811px;top:182px;width:95px;height:6px;background:linear-gradient(90deg,#f0f000 0,#f0f000 25%,#fff 100%);border:1px solid #8a8a8a"></div>
<svg class="a" style="left:900px;top:188px" width="11" height="7" viewBox="0 0 11 7"><path d="M5.500 .8L10 6.200H1Z" fill="#e8e8e8" stroke="#555" stroke-width="1.100"/></svg>
<div class="box" style="left:910px;top:175px;width:35px;height:21px"></div>
<div class="t" style="left:914px;top:177px;font-size:11.500px;color:#111">255</div>
<div class="a" style="left:761px;top:205px;width:194px;height:15px;background:linear-gradient(90deg,#e81010 0,#f8a000 9%,#f4ec10 17%,#58b820 26%,#00984c 35%,#00a8a0 44%,#10a8e8 51%,#1850b8 60%,#30208c 67%,#a0189c 75%,#e0108c 83%,#e02040 91%,#e03020 97%)"></div>
<div class="a" style="left:761px;top:205px;width:194px;height:15px;background:linear-gradient(rgba(255,255,255,.85) 0,rgba(255,255,255,.25) 30%,rgba(255,255,255,0) 50%,rgba(0,0,0,0) 60%,rgba(0,0,0,.8) 100%)"></div>
<div class="a" style="left:946px;top:205px;width:9px;height:8px;background:#fff"></div>
<div class="a" style="left:946px;top:213px;width:9px;height:7px;background:#000"></div>
<div class="a" style="left:755px;top:229px;width:240px;height:16px;background:#a6a6a6;border-top:1px solid #8a8a8a;border-bottom:1px solid #8e8e8e"></div>
<div class="a" style="left:755px;top:229px;width:36px;height:17px;background:#d6d6d6;border-right:1px solid #777;border-left:1px solid #eee;border-top:1px solid #eee"></div>
<div class="t" style="left:761px;top:229px;font-size:11.500px;color:#555;margin-top:.5px">调整</div>
<div class="a" style="left:791px;top:229px;width:36px;height:16px;background:#909090;border-right:1px solid #6a6a6a;border-top:1px solid #8a8a8a;border-bottom:1px solid #8e8e8e"></div>
<div class="t" style="left:797px;top:229px;font-size:11.500px;color:#545454;margin-top:.5px">蒙版</div>
<svg class="a" style="left:977px;top:233px" width="16" height="9" viewBox="0 0 16 9"><path d="M0 3H5L2.500 6Z" fill="#222"/><path d="M7 1H15M7 3.500H15M7 6H15M7 8.500H15" stroke="#555" stroke-width="1.200"/></svg>
<div class="a" style="left:755px;top:251px;width:240px;height:17px;background:#a6a6a6;border-top:1px solid #8a8a8a;border-bottom:1px solid #8e8e8e"></div>
<div class="a" style="left:755px;top:251px;width:36px;height:18px;background:#d6d6d6;border-right:1px solid #777;border-left:1px solid #eee;border-top:1px solid #eee"></div>
<div class="t" style="left:761px;top:251px;font-size:11.500px;color:#555;margin-top:.5px">图层</div>
<div class="a" style="left:791px;top:251px;width:36px;height:17px;background:#909090;border-right:1px solid #6a6a6a;border-top:1px solid #8a8a8a;border-bottom:1px solid #8e8e8e"></div>
<div class="t" style="left:797px;top:251px;font-size:11.500px;color:#545454;margin-top:.5px">通道</div>
<div class="a" style="left:827px;top:251px;width:37px;height:17px;background:#909090;border-right:1px solid #6a6a6a;border-top:1px solid #8a8a8a;border-bottom:1px solid #8e8e8e"></div>
<div class="t" style="left:833px;top:251px;font-size:11.500px;color:#545454;margin-top:.5px">路径</div>
<svg class="a" style="left:977px;top:255px" width="16" height="9" viewBox="0 0 16 9"><path d="M0 3H5L2.500 6Z" fill="#222"/><path d="M7 1H15M7 3.500H15M7 6H15M7 8.500H15" stroke="#555" stroke-width="1.200"/></svg>
<div class="a" style="left:755px;top:269px;width:240px;height:352px;background:#d6d6d6;border-left:1px solid #ececec"></div>
<div class="box" style="left:759px;top:272px;width:119px;height:21px"></div>
<div class="t" style="left:765px;top:275px;font-size:11.500px">强光</div>
<div class="arrowbtn" style="left:861px;top:273px;width:16px;height:19px"></div>
<svg class="a" style="left:864px;top:279px" width="10" height="7" viewBox="0 0 10 7"><path d="M1.200 1.200L5 5L8.800 1.200" fill="none" stroke="#3c5ca4" stroke-width="1.700"/></svg>
<div class="t" style="left:880px;top:275px;font-size:11.500px">不透明度:</div>
<div class="box" style="left:934px;top:272px;width:58px;height:20px"></div>
<div class="t" style="left:938px;top:275px;font-size:11.500px">50%</div>
<div class="arrowbtn" style="left:974px;top:273px;width:17px;height:18px"></div>
<svg class="a" style="left:979px;top:277px" width="7" height="10" viewBox="0 0 7 10"><path d="M1.500 1.200L5 5L1.500 8.800" fill="none" stroke="#3c5ca4" stroke-width="1.700"/></svg>
<div class="a" style="left:756px;top:294px;width:239px;height:1px;background:#bcbcbc"></div>
<div class="t" style="left:761px;top:301px;font-size:11.500px">锁定:</div>
<div class="a" style="left:795px;top:302px;width:11px;height:11px;border:1px solid #555;background:conic-gradient(#fff 25%,#ccc 0 50%,#fff 0 75%,#ccc 0) 0 0/6px 6px"></div>
<svg class="a" style="left:811px;top:301px" width="14" height="13" viewBox="0 0 14 13"><path d="M13 1L7 7" stroke="#333" stroke-width="1.800"/><path d="M7 6L8.500 7.500C7 11 4 12.500 1 12C3 10.500 4 8 7 6Z" fill="#333"/></svg>
<svg class="a" style="left:829px;top:301px" width="13" height="13" viewBox="0 0 13 13"><path d="M6.500 1V12M1 6.500H12" stroke="#333" stroke-width="1.300"/><path d="M6.500 0L4.500 2.500H8.500ZM6.500 13L4.500 10.500H8.500ZM0 6.500L2.500 4.500V8.500ZM13 6.500L10.500 4.500V8.500Z" fill="#333"/></svg>
<svg class="a" style="left:847px;top:301px" width="11" height="13" viewBox="0 0 11 13"><path d="M3 6V4C3 1 8 1 8 4V6" fill="none" stroke="#333" stroke-width="1.600"/><rect x="1" y="6" width="9" height="6.500" rx="1" fill="#333"/></svg>
<div class="t" style="left:904px;top:301px;font-size:11.500px">填充:</div>
<div class="box" style="left:934px;top:298px;width:58px;height:20px"></div>
<div class="t" style="left:938px;top:301px;font-size:11.500px">100%</div>
<div class="arrowbtn" style="left:974px;top:299px;width:17px;height:18px"></div>
<svg class="a" style="left:979px;top:303px" width="7" height="10" viewBox="0 0 7 10"><path d="M1.500 1.200L5 5L1.500 8.800" fill="none" stroke="#3c5ca4" stroke-width="1.700"/></svg>
<div class="a" style="left:756px;top:320px;width:223px;height:1px;background:#9c9c9c"></div>
<div class="a" style="left:777px;top:321px;width:1px;height:300px;background:#a8a8a8"></div>
<div class="a" style="left:756px;top:320px;width:223px;height:1px;background:#9c9c9c"></div>
<div class="a" style="left:759px;top:332px;width:15px;height:15px;border:1px solid #b8b8b8;border-right-color:#eee;border-bottom-color:#eee"></div>
<svg class="a" style="left:760.00px;top:334.70px" width="12" height="10" viewBox="0 0 14 11"><path d="M.5 5.500C3 -.2 11 -.2 13.500 5.500C11 11 3 11 .5 5.500Z" fill="#777" stroke="#4a4a4a" stroke-width=".9"/><ellipse cx="7" cy="5.700" rx="3.600" ry="3.400" fill="#222"/><circle cx="5.800" cy="4.300" r="1.100" fill="#c8c8c8"/></svg>
<div class="a" style="left:781px;top:324px;width:23.500px;height:32px;border:1px solid #2a2a2a;background:conic-gradient(#fff 25%,#dcdcdc 0 50%,#fff 0 75%,#dcdcdc 0) 0 0/8px 8px"></div>
<div class="t" style="left:811px;top:333px;font-size:11.500px;color:#111">卡片</div>
<div class="t" style="left:950px;top:333px;font-size:13.500px;font-family:'Liberation Serif',serif;font-style:italic;font-weight:bold;color:#444;letter-spacing:-.5px">fx</div>
<div class="a" style="left:969px;top:338px;width:0;height:0;border-left:3.500px solid transparent;border-right:3.500px solid transparent;border-bottom:4px solid #333"></div>
<svg class="a" style="left:798.00px;top:363.25px" width="11" height="9.5" viewBox="0 0 14 11"><path d="M.5 5.500C3 -.2 11 -.2 13.500 5.500C11 11 3 11 .5 5.500Z" fill="#777" stroke="#4a4a4a" stroke-width=".9"/><ellipse cx="7" cy="5.700" rx="3.600" ry="3.400" fill="#222"/><circle cx="5.800" cy="4.300" r="1.100" fill="#c8c8c8"/></svg>
<div class="t" style="left:813px;top:360px;font-size:12px">效果</div>
<div class="a" style="left:811px;top:378px;width:168px;height:1px;background:#a6a6a6"></div>
<svg class="a" style="left:815.00px;top:382.75px" width="11" height="9.5" viewBox="0 0 14 11"><path d="M.5 5.500C3 -.2 11 -.2 13.500 5.500C11 11 3 11 .5 5.500Z" fill="#777" stroke="#4a4a4a" stroke-width=".9"/><ellipse cx="7" cy="5.700" rx="3.600" ry="3.400" fill="#222"/><circle cx="5.800" cy="4.300" r="1.100" fill="#c8c8c8"/></svg>
<div class="t" style="left:831px;top:379.5px;font-size:12px">外发光</div>
<div class="a" style="left:829px;top:397px;width:150px;height:1px;background:#a6a6a6"></div>
<svg class="a" style="left:815.00px;top:401.25px" width="11" height="9.5" viewBox="0 0 14 11"><path d="M.5 5.500C3 -.2 11 -.2 13.500 5.500C11 11 3 11 .5 5.500Z" fill="#777" stroke="#4a4a4a" stroke-width=".9"/><ellipse cx="7" cy="5.700" rx="3.600" ry="3.400" fill="#222"/><circle cx="5.800" cy="4.300" r="1.100" fill="#c8c8c8"/></svg>
<div class="t" style="left:831px;top:398.0px;font-size:12px">斜面和浮雕</div>
<div class="a" style="left:829px;top:415px;width:150px;height:1px;background:#a6a6a6"></div>
<svg class="a" style="left:815.00px;top:419.75px" width="11" height="9.5" viewBox="0 0 14 11"><path d="M.5 5.500C3 -.2 11 -.2 13.500 5.500C11 11 3 11 .5 5.500Z" fill="#777" stroke="#4a4a4a" stroke-width=".9"/><ellipse cx="7" cy="5.700" rx="3.600" ry="3.400" fill="#222"/><circle cx="5.800" cy="4.300" r="1.100" fill="#c8c8c8"/></svg>
<div class="t" style="left:831px;top:416.5px;font-size:12px">渐变叠加</div>
<div class="a" style="left:756px;top:433px;width:223px;height:1px;background:#a0a0a0"></div>
<div class="a" style="left:759px;top:444px;width:15px;height:15px;border:1px solid #b8b8b8;border-right-color:#eee;border-bottom-color:#eee"></div>
<svg class="a" style="left:760.00px;top:446.70px" width="12" height="10" viewBox="0 0 14 11"><path d="M.5 5.500C3 -.2 11 -.2 13.500 5.500C11 11 3 11 .5 5.500Z" fill="#777" stroke="#4a4a4a" stroke-width=".9"/><ellipse cx="7" cy="5.700" rx="3.600" ry="3.400" fill="#222"/><circle cx="5.800" cy="4.300" r="1.100" fill="#c8c8c8"/></svg>
<div class="a" style="left:781px;top:436px;width:23.500px;height:32px;border:1px solid #2a2a2a;background:conic-gradient(#fff 25%,#dcdcdc 0 50%,#fff 0 75%,#dcdcdc 0) 0 0/8px 8px"></div>
<div class="t" style="left:811px;top:445px;font-size:11.500px;color:#111">金属</div>
<div class="t" style="left:950px;top:445px;font-size:13.500px;font-family:'Liberation Serif',serif;font-style:italic;font-weight:bold;color:#444;letter-spacing:-.5px">fx</div>
<div class="a" style="left:969px;top:450px;width:0;height:0;border-left:3.500px solid transparent;border-right:3.500px solid transparent;border-bottom:4px solid #333"></div>
<svg class="a" style="left:798.00px;top:475.25px" width="11" height="9.5" viewBox="0 0 14 11"><path d="M.5 5.500C3 -.2 11 -.2 13.500 5.500C11 11 3 11 .5 5.500Z" fill="#777" stroke="#4a4a4a" stroke-width=".9"/><ellipse cx="7" cy="5.700" rx="3.600" ry="3.400" fill="#222"/><circle cx="5.800" cy="4.300" r="1.100" fill="#c8c8c8"/></svg>
<div class="t" style="left:813px;top:472px;font-size:12px">效果</div>
<div class="a" style="left:811px;top:490px;width:168px;height:1px;background:#a6a6a6"></div>
<svg class="a" style="left:815.00px;top:494.75px" width="11" height="9.5" viewBox="0 0 14 11"><path d="M.5 5.500C3 -.2 11 -.2 13.500 5.500C11 11 3 11 .5 5.500Z" fill="#777" stroke="#4a4a4a" stroke-width=".9"/><ellipse cx="7" cy="5.700" rx="3.600" ry="3.400" fill="#222"/><circle cx="5.800" cy="4.300" r="1.100" fill="#c8c8c8"/></svg>
<div class="t" style="left:831px;top:491.5px;font-size:12px">渐变叠加</div>
<div class="a" style="left:756px;top:508px;width:223px;height:1px;background:#a0a0a0"></div>
<div class="a" style="left:759px;top:519px;width:15px;height:15px;border:1px solid #b8b8b8;border-right-color:#eee;border-bottom-color:#eee"></div>
<svg class="a" style="left:760.00px;top:521.70px" width="12" height="10" viewBox="0 0 14 11"><path d="M.5 5.500C3 -.2 11 -.2 13.500 5.500C11 11 3 11 .5 5.500Z" fill="#777" stroke="#4a4a4a" stroke-width=".9"/><ellipse cx="7" cy="5.700" rx="3.600" ry="3.400" fill="#222"/><circle cx="5.800" cy="4.300" r="1.100" fill="#c8c8c8"/></svg>
<div class="a" style="left:781px;top:511px;width:23.500px;height:32px;border:1px solid #2a2a2a;background:conic-gradient(#fff 25%,#dcdcdc 0 50%,#fff 0 75%,#dcdcdc 0) 0 0/8px 8px"></div>
<div class="t" style="left:811px;top:520px;font-size:11.500px;color:#111">开关</div>
<div class="t" style="left:950px;top:520px;font-size:13.500px;font-family:'Liberation Serif',serif;font-style:italic;font-weight:bold;color:#444;letter-spacing:-.5px">fx</div>
<div class="a" style="left:969px;top:525px;width:0;height:0;border-left:3.500px solid transparent;border-right:3.500px solid transparent;border-bottom:4px solid #333"></div>
<svg class="a" style="left:798.00px;top:550.25px" width="11" height="9.5" viewBox="0 0 14 11"><path d="M.5 5.500C3 -.2 11 -.2 13.500 5.500C11 11 3 11 .5 5.500Z" fill="#777" stroke="#4a4a4a" stroke-width=".9"/><ellipse cx="7" cy="5.700" rx="3.600" ry="3.400" fill="#222"/><circle cx="5.800" cy="4.300" r="1.100" fill="#c8c8c8"/></svg>
<div class="t" style="left:813px;top:547px;font-size:12px">效果</div>
<div class="a" style="left:811px;top:565px;width:168px;height:1px;background:#a6a6a6"></div>
<svg class="a" style="left:815.00px;top:569.75px" width="11" height="9.5" viewBox="0 0 14 11"><path d="M.5 5.500C3 -.2 11 -.2 13.500 5.500C11 11 3 11 .5 5.500Z" fill="#777" stroke="#4a4a4a" stroke-width=".9"/><ellipse cx="7" cy="5.700" rx="3.600" ry="3.400" fill="#222"/><circle cx="5.800" cy="4.300" r="1.100" fill="#c8c8c8"/></svg>
<div class="t" style="left:831px;top:566.5px;font-size:12px">斜面和浮雕</div>
<div class="a" style="left:778px;top:584px;width:201px;height:40px;background:#316ac5"></div>
<div class="a" style="left:759px;top:595px;width:15px;height:15px;border:1px solid #b8b8b8;border-right-color:#eee;border-bottom-color:#eee"></div>
<svg class="a" style="left:760.00px;top:597.70px" width="12" height="10" viewBox="0 0 14 11"><path d="M.5 5.500C3 -.2 11 -.2 13.500 5.500C11 11 3 11 .5 5.500Z" fill="#777" stroke="#4a4a4a" stroke-width=".9"/><ellipse cx="7" cy="5.700" rx="3.600" ry="3.400" fill="#222"/><circle cx="5.800" cy="4.300" r="1.100" fill="#c8c8c8"/></svg>
<div class="a" style="left:781px;top:586px;width:24px;height:34px;border:1px solid #fff;background:conic-gradient(#fff 25%,#dcdcdc 0 50%,#fff 0 75%,#dcdcdc 0) 0 0/8px 8px;box-shadow:0 0 0 1px #111"></div>
<div class="t" style="left:811px;top:596px;font-size:11.500px;color:#fff">管</div>
<div class="a" style="left:792px;top:326px;width:2px;height:2px;background:#222"></div>
<div class="a" style="left:786px;top:516px;width:4px;height:4px;background:#111"></div>
<div class="a" style="left:979px;top:321px;width:16px;height:300px;background:linear-gradient(90deg,#e8e8e8 0,#fafafa 5px,#f6f6f6 13px,#cfcfcf 14px,#c4c4c4 16px)"></div>
<div class="a" style="left:980px;top:324px;width:13px;height:14px;background:linear-gradient(#d6e2fa,#b8ccf4);border:1px solid #e4ecfc;border-radius:2px"></div>
<svg class="a" style="left:982px;top:327px" width="9" height="7" viewBox="0 0 9 7"><path d="M1 5.500L4.500 2L8 5.500" fill="none" stroke="#2c4c9c" stroke-width="2"/></svg>
<div class="a" style="left:981px;top:364px;width:11px;height:242px;background:linear-gradient(90deg,#c4d4f6,#b8ccf2 60%,#b0c4ee);border-radius:2px"></div>
<div class="a" style="left:846px;top:619px;width:6px;height:4px;border-radius:3px;background:#e8eefa"></div>
<div class="a" style="left:862px;top:619px;width:5px;height:4px;border-radius:3px;background:#dfe8f8"></div>
<div class="a" style="left:968px;top:322px;width:1px;height:38px;background:#c6c6c6"></div>
<div class="a" style="left:968px;top:434px;width:1px;height:38px;background:#c6c6c6"></div>
<div class="a" style="left:968px;top:509px;width:1px;height:38px;background:#c6c6c6"></div>
<div class="a" style="left:756px;top:583px;width:22px;height:1px;background:#a4a4a4"></div>
<!-- END RIGHT PANELS -->

<!-- left frame edge -->
<div class="a" style="left:0;top:0;width:4px;height:621px;background:linear-gradient(90deg,#8a8a8a 0,#8a8a8a 1px,#e6e6e6 1px,#e6e6e6 4px)"></div>
<div class="a" style="left:4px;top:53px;width:1px;height:568px;background:#5e5e5e"></div>
<div class="a" style="left:5px;top:54px;width:990px;height:1px;background:#e6e6e6"></div>

<div class="a" style="left:0;top:0;width:1000px;height:1px;background:#848484"></div>
</div></body></html>
